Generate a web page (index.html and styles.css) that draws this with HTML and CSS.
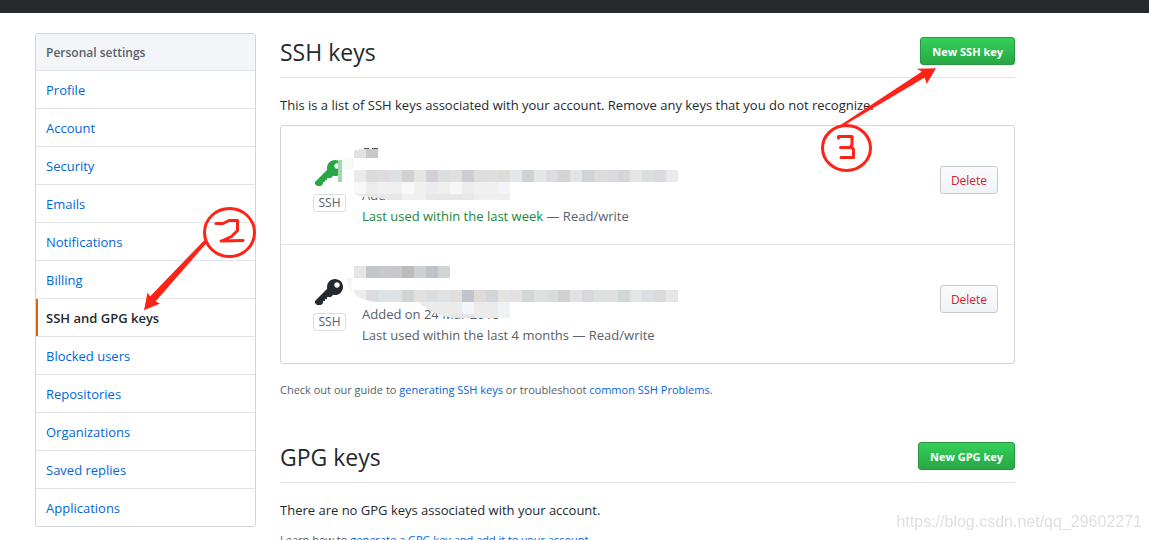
FILE: index.html
```html
<!DOCTYPE html>
<html lang="en">
<head>
<meta charset="utf-8">
<title>SSH and GPG keys</title>
<link rel="stylesheet" href="styles.css">
</head>
<body>
<header class="topbar"></header>
<div class="container">
  <nav class="menu" aria-label="Personal settings">
    <h3 class="menu-heading">Personal settings</h3>
    <a class="menu-item" href="#profile">Profile</a>
    <a class="menu-item" href="#account">Account</a>
    <a class="menu-item" href="#security">Security</a>
    <a class="menu-item" href="#emails">Emails</a>
    <a class="menu-item" href="#notifications">Notifications</a>
    <a class="menu-item" href="#billing">Billing</a>
    <a class="menu-item selected" href="#keys" aria-current="page">SSH and GPG keys</a>
    <a class="menu-item" href="#blocked">Blocked users</a>
    <a class="menu-item" href="#repositories">Repositories</a>
    <a class="menu-item" href="#organizations">Organizations</a>
    <a class="menu-item" href="#replies">Saved replies</a>
    <a class="menu-item" href="#applications">Applications</a>
  </nav>
  <main class="main">
    <section class="section">
      <div class="subhead">
        <h2 class="subhead-title">SSH keys</h2>
        <button class="btn btn-primary" type="button">New SSH key</button>
      </div>
      <p class="lead">This is a list of SSH keys associated with your account. Remove any keys that you do not recognize.</p>
      <ul class="key-list">
        <li class="key">
          <div class="key-type">
            <svg class="key-icon recent" viewBox="0 0 14 16" aria-hidden="true"><path d="M12.83 2.17C12.08 1.42 11.14 1.03 10 1c-1.13.03-2.08.42-2.83 1.17S6.04 3.86 6.01 5c0 .3.03.59.09.89L0 12v1l1 1h2l1-1v-1h1v-1h1v-1h2l1.09-1.11c.3.08.59.11.91.11 1.14-.03 2.08-.42 2.83-1.17S13.97 6.14 14 5c-.03-1.14-.42-2.08-1.17-2.83zM11 5.38c-.77 0-1.38-.61-1.38-1.38 0-.77.61-1.38 1.38-1.38.77 0 1.38.61 1.38 1.38 0 .77-.61 1.38-1.38 1.38z"/></svg>
            <span class="badge">SSH</span>
          </div>
          <div class="key-details">
            <span class="line"></span>
            <span class="line"></span>
            <span class="line">Added</span>
            <span class="line"><span class="used-recently">Last used within the last week</span> — Read/write</span>
            <svg class="redaction" viewBox="0 1 344 64" shape-rendering="crispEdges" aria-hidden="true">
              <defs><clipPath id="smudge-a"><path d="M0 0H344V58H52L34 55C20 55 16 52 15 50V18H0Z"/></clipPath></defs>
              <path fill="#f4fbf6" d="M4 16h12v12H4z"/>
              <path fill="#a0d8ae" d="M0 18h4v22H0z"/>
              <path fill="#fff" d="M4 28h12v12H4zM16 16h328v39H16z"/>
              <path fill="#555" d="M26 6h5v1h-5zM34 6h6v1h-6z"/>
              <path fill="#e1e1e2" d="M16 9q4-2 12-2v9H16z"/>
              <path fill="#c8c8cb" d="M28 7h12v9H28z"/>
              <g>
                <path fill="#ebebea" d="M16 28h12v12H16z"/><path fill="#d9dcdb" d="M28 28h12v12H28z"/><path fill="#dfdae0" d="M40 28h12v12H40z"/><path fill="#dce1e3" d="M52 28h12v12H52z"/><path fill="#d1d1d2" d="M64 28h12v12H64z"/><path fill="#e5e5e3" d="M76 28h12v12H76z"/><path fill="#d5cfd8" d="M88 28h12v12H88z"/><path fill="#dadedf" d="M100 28h12v12h-12z"/><path fill="#dedfde" d="M112 28h12v12h-12z"/><path fill="#cbccd5" d="M124 28h12v12h-12z"/><path fill="#ddd" d="M136 28h12v12h-12z"/><path fill="#dcdee0" d="M148 28h12v12h-12z"/><path fill="#dedcd7" d="M160 28h12v12h-12z"/><path fill="#e5e6ea" d="M172 28h12v12h-12z"/><path fill="#cdd2d5" d="M184 28h12v12h-12z"/><path fill="#e4e7e6" d="M196 28h12v12h-12z"/><path fill="#dcdce0" d="M208 28h12v12h-12z"/><path fill="#d4d4d5" d="M220 28h12v12h-12z"/><path fill="#e4e5e9" d="M232 28h12v12h-12z"/><path fill="#ced5d8" d="M244 28h12v12h-12z"/><path fill="#dcdcdc" d="M256 28h12v12h-12z"/><path fill="#dcdadd" d="M268 28h12v12h-12z"/><path fill="#d5d4d9" d="M280 28h12v12h-12z"/><path fill="#e5e5e5" d="M292 28h12v12h-12z"/><path fill="#d8dfdd" d="M304 28h12v12h-12z"/><path fill="#dadbde" d="M316 28h12v12h-12z"/><path fill="#e9eaed" d="M328 28h12v12h-12z"/>
              </g>
              <g clip-path="url(#smudge-a)">
                <path fill="#f1f0f1" d="M16 40h156v12H16z"/><path fill="#f8f8f8" d="M16 40h12v12H16z"/><path fill="#ececec" d="M28 40h12v12H28z"/><path fill="#f8f8f9" d="M64 40h12v12H64z"/><path fill="#ececee" d="M88 40h12v12H88zM124 40h12v12h-12z"/><path fill="#f7f7f7" d="M112 40h12v12h-12z"/><path fill="#f3f4f8" d="M160 40h12v12h-12z"/>
                <path fill="#e8e7e8" d="M16 52h156v6H16z"/><path fill="#f0f0f0" d="M64 52h24v6H64z"/><path fill="#eee" d="M136 52h36v6h-36z"/>
              </g>
            </svg>
          </div>
          <button class="btn btn-danger" type="button">Delete</button>
        </li>
        <li class="key">
          <div class="key-type">
            <svg class="key-icon" viewBox="0 0 14 16" aria-hidden="true"><path d="M12.83 2.17C12.08 1.42 11.14 1.03 10 1c-1.13.03-2.08.42-2.83 1.17S6.04 3.86 6.01 5c0 .3.03.59.09.89L0 12v1l1 1h2l1-1v-1h1v-1h1v-1h2l1.09-1.11c.3.08.59.11.91.11 1.14-.03 2.08-.42 2.83-1.17S13.97 6.14 14 5c-.03-1.14-.42-2.08-1.17-2.83zM11 5.38c-.77 0-1.38-.61-1.38-1.38 0-.77.61-1.38 1.38-1.38.77 0 1.38.61 1.38 1.38 0 .77-.61 1.38-1.38 1.38z"/></svg>
            <span class="badge">SSH</span>
          </div>
          <div class="key-details">
            <span class="line"></span>
            <span class="line"></span>
            <span class="line">Added on 24 Mar 2018</span>
            <span class="line">Last used within the last 4 months — Read/write</span>
            <svg class="redaction" viewBox="0 0 344 64" shape-rendering="crispEdges" aria-hidden="true">
              <defs>
                <clipPath id="smudge-b"><path d="M16 0H344V40H38C24 38 16 34 16 28Z"/></clipPath>
                <clipPath id="smudge-c"><path d="M78 38H172V56H116C100 54 88 48 78 38Z"/></clipPath>
              </defs>
              <path fill="#f6f6f7" d="M8 16h6v16q-5-7-6-16z"/>
              <path fill="#e8e4e4" d="M16 4h12v12H16z"/><path fill="#c1c7c8" d="M28 4h12v12H28z"/><path fill="#c8c9ca" d="M40 4h12v12H40z"/><path fill="#c7c8ce" d="M52 4h12v12H52z"/><path fill="#bcbcbd" d="M64 4h12v12H64z"/><path fill="#cecfd2" d="M76 4h12v12H76z"/><path fill="#bfc2ca" d="M88 4h12v12H88z"/><path fill="#d2d4d4" d="M100 4h12v12h-12z"/>
              <g clip-path="url(#smudge-b)">
                <path fill="#ececea" d="M16 28h12v12H16z"/><path fill="#dcdcde" d="M28 28h12v12H28z"/><path fill="#dfe3e7" d="M40 28h12v12H40z"/><path fill="#dde2e4" d="M52 28h12v12H52z"/><path fill="#d3d4d8" d="M64 28h12v12H64z"/><path fill="#e3e1df" d="M76 28h12v12H76z"/><path fill="#dbdcdd" d="M88 28h12v12H88z"/><path fill="#dfe2e5" d="M100 28h12v12h-12z"/><path fill="#e0dfde" d="M112 28h12v12h-12z"/><path fill="#c1c4cc" d="M124 28h12v12h-12z"/><path fill="#dddad8" d="M136 28h12v12h-12z"/><path fill="#d1d5d9" d="M148 28h12v12h-12z"/><path fill="#e3e4e2" d="M160 28h12v12h-12z"/><path fill="#e4dfe4" d="M172 28h12v12h-12z"/><path fill="#d2d7da" d="M184 28h12v12h-12z"/><path fill="#dfdfe2" d="M196 28h12v12h-12z"/><path fill="#dadbdf" d="M208 28h12v12h-12z"/><path fill="#d1d1d0" d="M220 28h12v12h-12z"/><path fill="#e2e2e5" d="M232 28h12v12h-12z"/><path fill="#d8d9df" d="M244 28h12v12h-12z"/><path fill="#dde0df" d="M256 28h12v12h-12z"/><path fill="#dfdfdf" d="M268 28h12v12h-12z"/><path fill="#d3d7d6" d="M280 28h12v12h-12z"/><path fill="#e5e5e6" d="M292 28h12v12h-12z"/><path fill="#dce0e5" d="M304 28h12v12h-12z"/><path fill="#dadbde" d="M316 28h12v12h-12z"/><path fill="#e5e5e4" d="M328 28h12v12h-12z"/>
              </g>
              <g clip-path="url(#smudge-c)">
                <path fill="#ebebeb" d="M76 40h96v16H76z"/><path fill="#f3f5f8" d="M124 40h12v12h-12z"/><path fill="#ece9eb" d="M148 40h12v12h-12z"/><path fill="#f1f2f6" d="M160 40h12v16h-12z"/><path fill="#e4e4e4" d="M112 52h24v4h-24z"/>
              </g>
            </svg>
          </div>
          <button class="btn btn-danger" type="button">Delete</button>
        </li>
      </ul>
      <p class="help">Check out our guide to <a href="#generate">generating SSH keys</a> or troubleshoot <a href="#problems">common SSH Problems</a>.</p>
    </section>
    <section class="section">
      <div class="subhead">
        <h2 class="subhead-title">GPG keys</h2>
        <button class="btn btn-primary" type="button">New GPG key</button>
      </div>
      <p class="lead">There are no GPG keys associated with your account.</p>
      <p class="help">Learn how to <a href="#gpg">generate a GPG key and add it to your account</a>.</p>
    </section>
  </main>
</div>
<svg class="annotations" viewBox="0 0 1149 540" aria-hidden="true">
  <g class="pen">
    <ellipse cx="229.500" cy="232.500" rx="25" ry="24"/>
    <path d="M216 223.500h7l6-3h8.500v10l-6 6-10 4.500M221 241l22-.5"/>
    <ellipse cx="846.500" cy="148" rx="24" ry="22.500"/>
    <path d="M838.500 138v-1.500h13.500v8l-2 3H840.500H852l1.500 2v8H841"/>
  </g>
  <path class="arrow" d="M204.500 240L150 296.500 147.500 292.500 144 310.300 160 303.500 155.500 301.500 207.500 242z"/>
  <path class="arrow" d="M839 126L922 71.500 916.500 68.700 936 68.300 926.700 84 924.700 77.500 843 126z"/>
</svg>
<div class="watermark">https://blog.csdn.net/qq_29602271</div>
</body>
</html>
```
FILE: styles.css
```css
* { box-sizing: border-box; }

body {
  margin: 0;
  overflow: hidden;
  background: #fff;
  color: #24292e;
  font: 13px/21px "Open Sans", "Noto Sans", sans-serif;
}

a { color: #0366d6; text-decoration: none; }
h2, h3, p, ul { margin: 0; padding: 0; }

.topbar { height: 13px; background: #24292e; }

.container {
  display: flex;
  gap: 24px;
  align-items: flex-start;
  max-width: 1015px;
  padding: 20px 0 0 35px;
}

.menu {
  flex: 0 0 221px;
  border: 1px solid #d1d5da;
  border-radius: 3px;
  overflow: hidden;
}

.menu-heading {
  padding: 8px 10px 7px;
  border-bottom: 1px solid #e1e4e8;
  background: #f3f5f8;
  color: #586069;
  font-size: 12px;
  font-weight: 600;
}

.menu-item {
  display: block;
  padding: 9px 10px 7px;
  border-bottom: 1px solid #e1e4e8;
}
.menu-item:last-child { border-bottom: 0; }
.menu-item.selected {
  color: #24292e;
  font-weight: 600;
  box-shadow: inset 2px 0 #e36209;
}

.main { flex: 1; min-width: 0; }
.section { margin-bottom: 39px; }

.subhead {
  display: flex;
  justify-content: space-between;
  align-items: center;
  padding-bottom: 8px;
  border-bottom: 1px solid #e1e4e8;
}
.subhead-title {
  padding-top: 2px;
  font-size: 23px;
  line-height: 34px;
  font-weight: 400;
}

.lead { margin: 17px 0 9px; }
.help {
  margin-top: 10px;
  color: #586069;
  font-size: 11px;
  line-height: 18px;
}

.btn {
  height: 28px;
  padding: 1px 11px 0;
  border: 1px solid #c5c9cd;
  border-radius: 3px;
  font: 700 11px/18px "Open Sans", "Noto Sans", sans-serif;
  white-space: nowrap;
}
.btn-primary {
  border-color: #269640;
  background: linear-gradient(#34d058, #28a745);
  color: #fff;
}
.btn-danger {
  min-width: 58px;
  margin-bottom: 10px;
  padding: 1px 0 0;
  background: linear-gradient(#fafbfc, #eff3f6);
  color: #cb2431;
  font-size: 12px;
  font-weight: 400;
}

.key-list {
  margin-bottom: 17px;
  border: 1px solid #d1d5da;
  border-radius: 3px;
  list-style: none;
}
.key {
  display: flex;
  align-items: center;
  gap: 16px;
  padding: 17px 16px 17px 32px;
}
.key + .key { border-top: 1px solid #e1e4e8; }

.key-type {
  display: flex;
  flex-direction: column;
  gap: 4px;
  width: 33px;
}
.key-icon {
  width: 28px;
  height: 32px;
  margin-left: 2px;
  fill: #24292e;
}
.key-icon.recent { fill: #28a745; }
.badge {
  border: 1px solid #dcdfe2;
  border-radius: 3px;
  color: #586069;
  font-size: 12px;
  line-height: 16px;
  text-align: center;
}

.key-details { position: relative; flex: 1; color: #586069; }
.line { display: block; height: 21px; }
.used-recently { color: #22863a; }

/* Pixelated cover over the private key name and fingerprint */
.redaction {
  position: absolute;
  top: 0;
  left: -24px;
  width: 344px;
  height: 64px;
}

.annotations {
  position: absolute;
  top: 0;
  left: 0;
  width: 1149px;
  height: 540px;
  pointer-events: none;
}
.pen {
  fill: none;
  stroke: #ff2317;
  stroke-width: 3;
  stroke-linecap: round;
  stroke-linejoin: round;
}
.arrow { fill: #ff2317; }

.watermark {
  position: fixed;
  right: 7px;
  bottom: 8px;
  color: #dfdfdf;
  font: 16px/20px "Liberation Sans", sans-serif;
}
```
